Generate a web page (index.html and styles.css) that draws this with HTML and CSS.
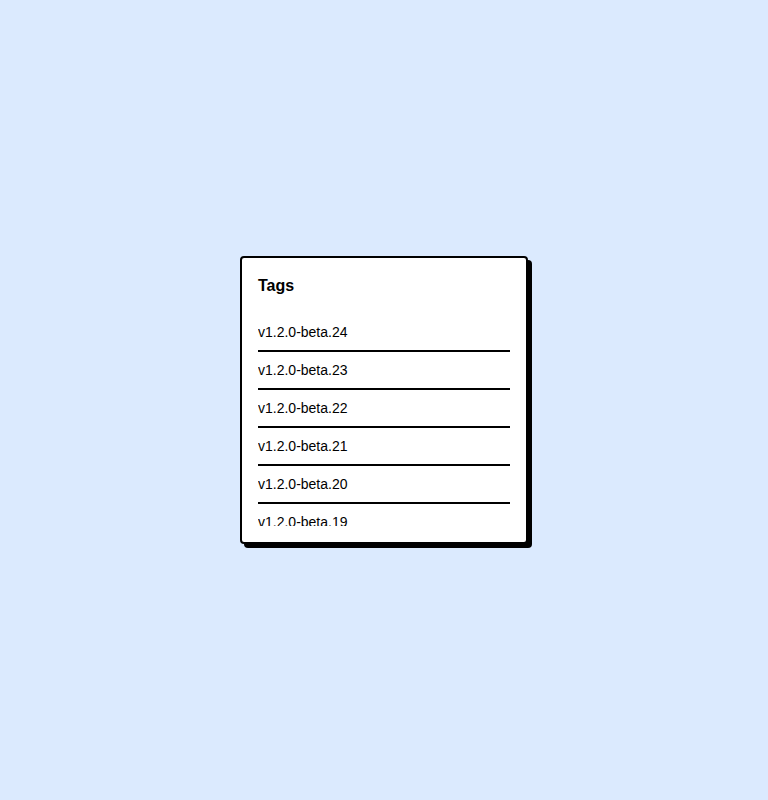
FILE: index.html
```html
<!DOCTYPE html>
<html lang="en">
<head>
    <meta charset="UTF-8">
    <meta name="viewport" content="width=device-width, initial-scale=1.0">
    <title>Tags</title>
    <link rel="stylesheet" href="styles.css">
</head>
<body>
    <div class="tags-card">
        <h4 class="tags-title">Tags</h4>
        <ul class="tags-list">
            <li>v1.2.0-beta.24</li>
            <li>v1.2.0-beta.23</li>
            <li>v1.2.0-beta.22</li>
            <li>v1.2.0-beta.21</li>
            <li>v1.2.0-beta.20</li>
            <li>v1.2.0-beta.19</li>
            <li>v1.2.0-beta.18</li>
            <li>v1.2.0-beta.17</li>
        </ul>
    </div>
</body>
</html>
```

FILE: styles.css
```css
*{
    margin: 0;
    padding: 0;
    box-sizing: border-box;
}
body{
    min-height: 100vh;
    background: #dbeafe;
    font-family: "Liberation Sans", Arial, sans-serif;
    color: #000;
    display: flex;
    align-items: center;
    justify-content: center;
}
.tags-card{
    width: 288px;
    height: 288px;
    background: #fff;
    border: 2px solid #000;
    border-radius: 4px;
    box-shadow: 4px 4px 0 #000;
    padding: 16px;
    display: flex;
    flex-direction: column;
}
.tags-title{
    font-size: 16px;
    font-weight: bold;
    line-height: 24px;
    margin-bottom: 16px;
}
.tags-list{
    list-style: none;
    flex: 1;
    overflow-y: auto;
    scrollbar-width: none;
}
.tags-list li{
    font-size: 14px;
    line-height: 20px;
    padding: 8px 0;
    border-bottom: 2px solid #000;
}
```
